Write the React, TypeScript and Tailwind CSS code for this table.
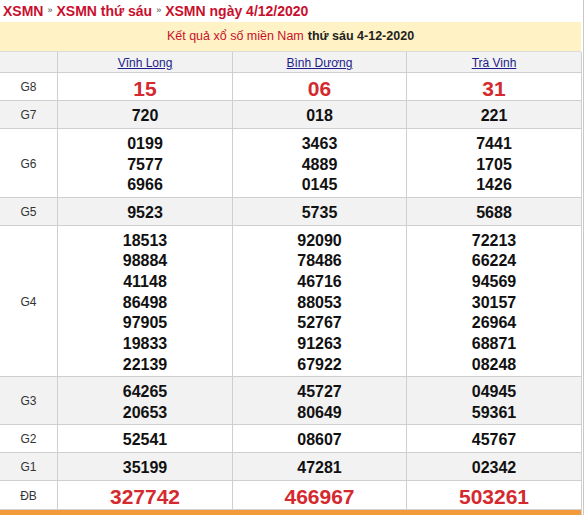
import React from "react";

type Row = { label: string; h: string; bg: string; kind: "big" | "norm" | "db"; cols: string[][] };

const rows: Row[] = [
  { label: "G8", h: "h-[28px]", bg: "bg-white", kind: "big", cols: [["15"], ["06"], ["31"]] },
  { label: "G7", h: "h-[28px]", bg: "bg-[#f2f2f2]", kind: "norm", cols: [["720"], ["018"], ["221"]] },
  {
    label: "G6",
    h: "h-[69px]",
    bg: "bg-white",
    kind: "norm",
    cols: [
      ["0199", "7577", "6966"],
      ["3463", "4889", "0145"],
      ["7441", "1705", "1426"],
    ],
  },
  { label: "G5", h: "h-[28px]", bg: "bg-[#f2f2f2]", kind: "norm", cols: [["9523"], ["5735"], ["5688"]] },
  {
    label: "G4",
    h: "h-[151px]",
    bg: "bg-white",
    kind: "norm",
    cols: [
      ["18513", "98884", "41148", "86498", "97905", "19833", "22139"],
      ["92090", "78486", "46716", "88053", "52767", "91263", "67922"],
      ["72213", "66224", "94569", "30157", "26964", "68871", "08248"],
    ],
  },
  {
    label: "G3",
    h: "h-[48px]",
    bg: "bg-[#f2f2f2]",
    kind: "norm",
    cols: [
      ["64265", "20653"],
      ["45727", "80649"],
      ["04945", "59361"],
    ],
  },
  { label: "G2", h: "h-[28px]", bg: "bg-white", kind: "norm", cols: [["52541"], ["08607"], ["45767"]] },
  { label: "G1", h: "h-[28px]", bg: "bg-[#f2f2f2]", kind: "norm", cols: [["35199"], ["47281"], ["02342"]] },
  { label: "ĐB", h: "h-[29px]", bg: "bg-white", kind: "db", cols: [["327742"], ["466967"], ["503261"]] },
];

const numCls = {
  big: "text-[21px] leading-[22px] text-[#d42a2f] font-bold",
  norm: "text-[16px] leading-[20.7px] text-[#111] font-bold",
  db: "text-[21px] leading-[22px] text-[#d42a2f] font-bold",
};

const font = { fontFamily: '"Liberation Sans", Arial, sans-serif' };

export default function App() {
  const provinces = ["Vĩnh Long", "Bình Dương", "Trà Vinh"];
  return (
    <div className="w-[585px] h-[515px] overflow-hidden bg-white" style={font}>
      <div className="w-[584px] border-r border-[#c8c8c8]">
        <div className="h-[22px] flex items-center pl-[3px] text-[14px] font-bold text-[#c8102e] whitespace-nowrap">
          <span>XSMN</span>
          <span className="text-[9px] text-[#444] font-normal mx-[4px]">»</span>
          <span>XSMN thứ sáu</span>
          <span className="text-[9px] text-[#444] font-normal mx-[4px]">»</span>
          <span>XSMN ngày 4/12/2020</span>
        </div>
        <div className="w-[581px] h-[30px] bg-[#fff2c4] flex items-center justify-center text-[12.5px] border-b border-[#dcdcdc]">
          <span className="text-[#c8102e]">Kết quả xổ số miền Nam</span>
          <span className="ml-[4px] font-bold text-[#222]">thứ sáu 4-12-2020</span>
        </div>
        <div className="w-[582px] border-r border-[#cfcfcf]">
          <div className="grid grid-cols-[58px_175px_174px_174px] h-[21px] bg-[#f2f2f2] border-b border-[#cfcfcf]">
            <div className="border-r border-[#cfcfcf]" />
            {provinces.map((p, i) => (
              <div
                key={p}
                className={`flex items-center justify-center pt-[2px] text-[12px] ${i < 2 ? "border-r border-[#cfcfcf]" : ""}`}
              >
                <span className="text-[#1c1c8a] underline">{p}</span>
              </div>
            ))}
          </div>
          {rows.map((r) => (
            <div
              key={r.label}
              className={`grid grid-cols-[58px_175px_174px_174px] ${r.h} ${r.bg} border-b border-[#cfcfcf]`}
            >
              <div className="border-r border-[#cfcfcf] flex items-center justify-center pt-[1px] text-[12px] text-[#333]">
                {r.label}
              </div>
              {r.cols.map((c, i) => (
                <div
                  key={i}
                  className={`flex flex-col items-center justify-center pt-[4px] ${i < 2 ? "border-r border-[#cfcfcf]" : ""}`}
                >
                  {c.map((n) => (
                    <div key={n} className={numCls[r.kind]}>
                      {n}
                    </div>
                  ))}
                </div>
              ))}
            </div>
          ))}
          <div className="h-[30px] bg-[#f39a3a]" />
        </div>
      </div>
    </div>
  );
}
